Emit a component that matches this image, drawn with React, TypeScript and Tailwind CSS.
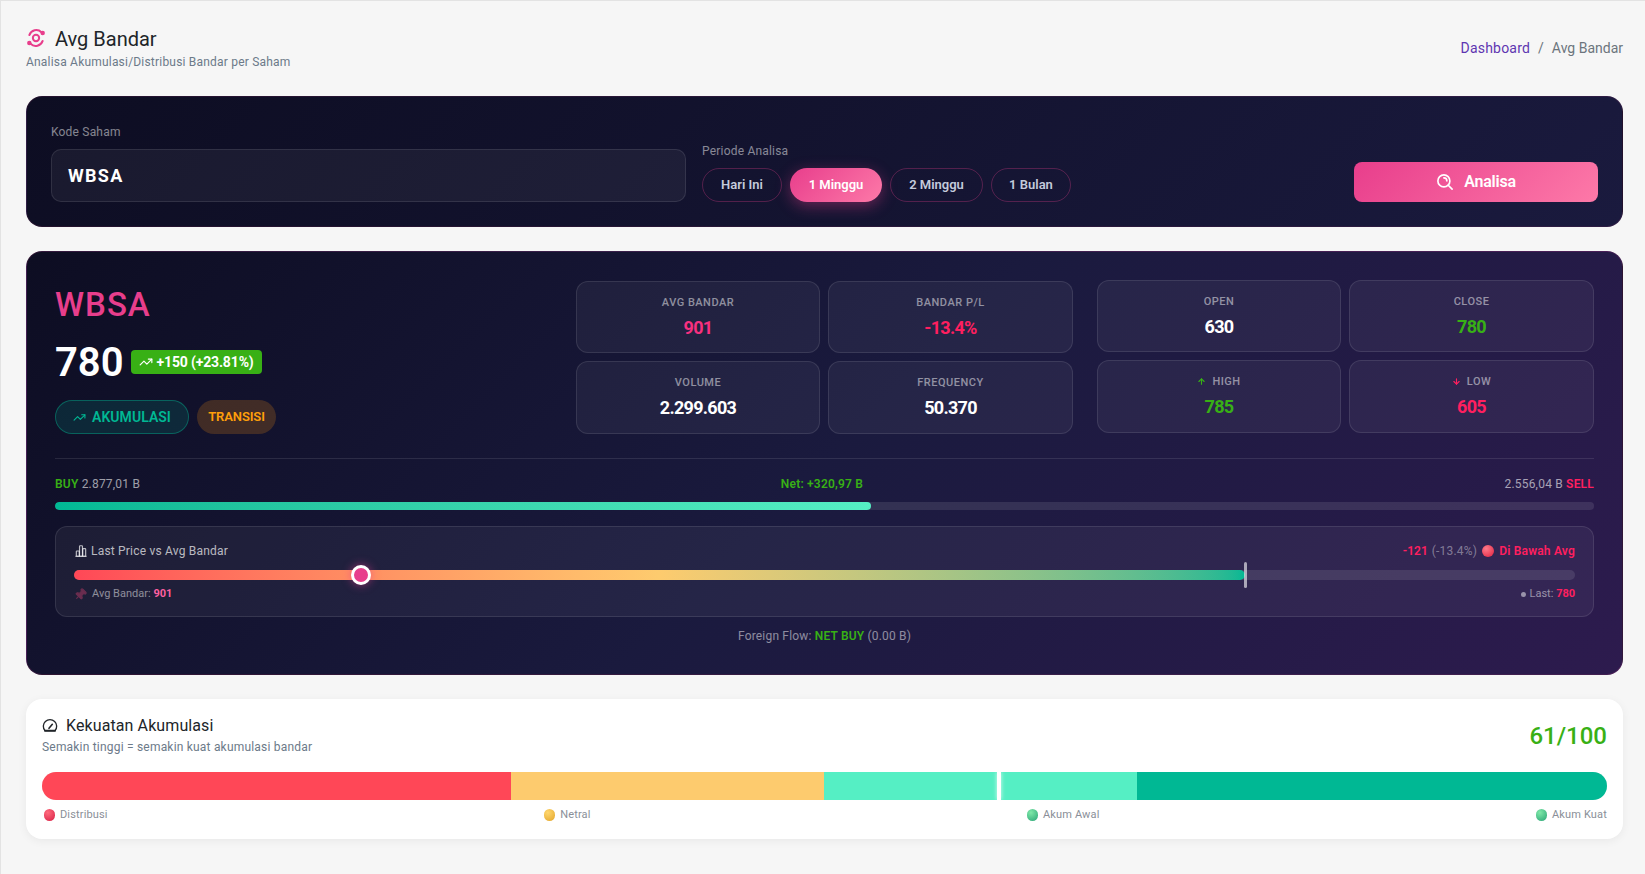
import { TrendingUp, ArrowUp, ArrowDown, Pin } from "lucide-react";

// ==============================================================

const BandarIcon = () => (
  <svg width="20" height="20" viewBox="0 0 24 24" fill="none" stroke="#e83e8c" strokeWidth="2.4" strokeLinecap="round" strokeLinejoin="round">
    <circle cx="12" cy="12" r="3.8" />
    <path d="M4 8.5A8.8 8.8 0 0 1 18.5 5" />
    <path d="M20 15.5A8.8 8.8 0 0 1 5.5 19" />
    <circle cx="20" cy="6" r="1.5" fill="#e83e8c" />
    <circle cx="4" cy="18" r="1.5" fill="#e83e8c" />
  </svg>
);

const SearchIcon = () => (
  <svg width="18" height="18" viewBox="0 0 24 24" fill="none" stroke="currentColor" strokeWidth="2.2" strokeLinecap="round" strokeLinejoin="round">
    <circle cx="10.5" cy="10.5" r="8" />
    <path d="M21.5 21.5l-5.2-5.2" />
    <path d="M10.5 6.5a4 4 0 0 1 4 4" />
  </svg>
);

const GaugeIcon = () => (
  <svg width="16" height="16" viewBox="0 0 24 24" fill="none" stroke="#212529" strokeWidth="2" strokeLinecap="round" strokeLinejoin="round">
    <path d="M4.5 19a10 10 0 1 1 15 0z" />
    <path d="M4.5 19h15" strokeWidth="3" />
    <path d="M10.5 15.5L15.5 9.5" strokeWidth="2.4" />
  </svg>
);

const BarsIcon = () => (
  <svg width="14" height="14" viewBox="0 0 24 24" fill="none" stroke="currentColor" strokeWidth="2" strokeLinecap="round" strokeLinejoin="round">
    <path d="M3 21h18" />
    <rect x="4" y="12" width="5" height="9" rx="1" />
    <rect x="9.5" y="3" width="5" height="18" rx="1" />
    <rect x="15" y="8" width="5" height="13" rx="1" />
  </svg>
);

const Dot = ({ className }: { className: string }) => (
  <span className={`inline-block rounded-full ${className}`} />
);

const StatBox = ({ label, value, color, icon }: { label: string; value: string; color: string; icon?: React.ReactNode }) => (
  <div className="flex h-[72.4px] flex-col items-center rounded-xl border border-white/10 bg-white/5 pt-[13px]">
    <div className="flex h-[15px] items-center gap-1.5 text-[11px] font-medium leading-none tracking-[0.5px] text-white/50">
      {icon}
      {label}
    </div>
    <div className={`mt-[4px] text-[18px] font-bold leading-[27px] tracking-[-0.7px] ${color}`}>{value}</div>
  </div>
);

const periods = ["Hari Ini", "1 Minggu", "2 Minggu", "1 Bulan"];

const App = () => {
  return (
    <div className="min-h-[874px] border-l border-t border-[#e3e3e3] bg-[#f6f6f6] pl-[25px] pr-[22px] pt-[23px] font-['Roboto',sans-serif] text-[#212529]">
      {/* header */}
      <div className="flex items-center justify-between">
        <div>
          <div className="flex h-[30px] items-center">
            <span className="mr-[9px] -mt-[3px]">
              <BandarIcon />
            </span>
            <h1 className="text-[20px] font-normal leading-[30px]">Avg Bandar</h1>
          </div>
          <p className="-mt-[1px] text-[12px] leading-[18px] tracking-[0.2px] text-[#6c7a89]">Analisa Akumulasi/Distribusi Bandar per Saham</p>
        </div>
        <div className="mt-[2px] flex items-center text-[14px] leading-[21px]">
          <span className="tracking-[0.2px] text-[#5e35b1]">Dashboard</span>
          <span className="mx-2 text-[#6c757d]">/</span>
          <span className="text-[#6c757d]">Avg Bandar</span>
        </div>
      </div>

      {/* form */}
      <div className="mt-[25px] flex h-[131px] items-end rounded-2xl border border-[#e83e8c]/10 bg-[linear-gradient(135deg,#0d0d22_0%,#1a1a3e_100%)] px-[24px] pb-[24px]">
        <div className="w-[635px]">
          <label className="block text-[12px] leading-[18px] tracking-[0.2px] text-white/50">Kode Saham</label>
          <div className="mt-[8px] flex h-[53px] items-center rounded-[10px] border border-white/10 bg-white/5 px-[16px] text-[18px] font-bold tracking-[1.3px] text-white">
            WBSA
          </div>
        </div>
        <div className="ml-[16px] flex-1">
          <label className="block text-[12px] leading-[18px] tracking-[0.2px] text-white/50">Periode Analisa</label>
          <div className="mt-[8px] flex gap-[8px]">
            {periods.map((p) =>
              p === "1 Minggu" ? (
                <span key={p} className="flex h-[34px] w-[92px] items-center justify-center rounded-[20px] bg-[linear-gradient(135deg,#e83e8c,#fd79a8)] text-[13px] font-semibold text-white shadow-[0_4px_15px_rgba(232,62,140,0.4)]">
                  {p}
                </span>
              ) : (
                <span key={p} className={`flex h-[34px] items-center justify-center rounded-[20px] border border-[#e83e8c]/30 text-[13px] font-semibold text-[#c4cbdc] ${p === "2 Minggu" ? "w-[93px]" : "w-[80px]"}`}>
                  {p}
                </span>
              )
            )}
          </div>
        </div>
        <button className="flex h-[40px] w-[244px] items-center justify-center gap-[10px] rounded-lg bg-[linear-gradient(135deg,#e83e8c,#fd79a8)] text-[16px] font-semibold tracking-[-0.2px] text-white">
          <SearchIcon />
          Analisa
        </button>
      </div>

      {/* result */}
      <div className="mt-[24px] h-[424px] rounded-2xl border border-[#e83e8c]/15 bg-[linear-gradient(135deg,#0d0d22_0%,#1a1a3e_50%,#2d1b4e_100%)] px-[28px] pt-[28px]">
        <div className="grid h-[179px] grid-cols-3 gap-6 border-b border-white/10">
          <div>
            <div className="mt-[6px] text-[33px] font-medium leading-[38px] tracking-[1px] text-[#e83e8c]">WBSA</div>
            <div className="mt-[15px] flex items-center">
              <span className="text-[40px] font-semibold leading-[48px] text-white">780</span>
              <span className="-mt-[2px] ml-[7px] flex h-[24px] w-[131px] items-center justify-center gap-1 rounded bg-[#38b015] text-[14px] font-bold tracking-[-0.15px] text-white">
                <TrendingUp size={14} strokeWidth={2} />
                +150 (+23.81%)
              </span>
            </div>
            <div className="mt-[13px] flex gap-2">
              <span className="flex h-[34px] w-[134px] items-center justify-center gap-[6px] rounded-[20px] border border-[#00b894]/40 bg-[#00b894]/15 text-[14px] font-semibold tracking-[0.05px] text-[#00b894]">
                <TrendingUp size={13} strokeWidth={2} />
                AKUMULASI
              </span>
              <span className="flex h-[34px] w-[79px] items-center justify-center rounded-[20px] bg-[#fd9610]/20 text-[13px] font-semibold tracking-[-0.1px] text-[#ff9f0a]">
                TRANSISI
              </span>
            </div>
          </div>
          <div className="mt-px grid grid-cols-[244px_1fr] content-start gap-2">
            <StatBox label="AVG BANDAR" value="901" color="text-[#f7307f]" />
            <StatBox label="BANDAR P/L" value="-13.4%" color="text-[#ff1f5f]" />
            <StatBox label="VOLUME" value="2.299.603" color="text-white" />
            <StatBox label="FREQUENCY" value="50.370" color="text-white" />
          </div>
          <div className="grid grid-cols-[244px_1fr] content-start gap-2">
            <StatBox label="OPEN" value="630" color="text-white" />
            <StatBox label="CLOSE" value="780" color="text-[#38b015]" />
            <StatBox label="HIGH" value="785" color="text-[#38b015]" icon={<ArrowUp size={9} strokeWidth={3} className="text-[#38b015]" />} />
            <StatBox label="LOW" value="605" color="text-[#ff1f5f]" icon={<ArrowDown size={9} strokeWidth={3} className="text-[#ff1f5f]" />} />
          </div>
        </div>

        <div className="mt-[15px] flex h-[19px] items-center justify-between text-[12px] tracking-[0.2px] text-white/60">
          <div className="w-[400px]">
            <span className="font-semibold text-[#38b015]">BUY</span> 2.877,01 B
          </div>
          <div className="mr-[5px] font-semibold text-[#38b015]">Net: +320,97 B</div>
          <div className="w-[400px] text-right">
            2.556,04 B <span className="font-semibold text-[#ff1f5f]">SELL</span>
          </div>
        </div>
        <div className="mt-[9px] h-2 overflow-hidden rounded-full bg-white/10">
          <div className="h-full w-[53%] rounded-full bg-gradient-to-r from-[#00b894] to-[#55efc4]" />
        </div>

        <div className="mt-[16px] h-[91px] rounded-xl border border-white/10 bg-white/5 px-[18px] pt-[15px]">
          <div className="flex h-[18px] items-center justify-between text-[12px]">
            <div className="flex items-center gap-[3px] tracking-[0.2px] text-white/70">
              <BarsIcon />
              Last Price vs Avg Bandar
            </div>
            <div className="flex items-center text-white/40">
              <span className="font-semibold text-[#ff1f5f]">-121</span>
              <span className="ml-1 tracking-[0.2px]">(-13.4%)</span>
              <Dot className="ml-[5px] h-[12px] w-[12px] bg-[radial-gradient(circle_at_35%_30%,#ff7a8a,#e0213f)]" />
              <span className="ml-[5px] font-semibold tracking-[0.2px] text-[#ff1f5f]">Di Bawah Avg</span>
            </div>
          </div>
          <div className="relative mt-[10px] h-[10px] rounded-full bg-white/10">
            <div className="h-full w-[78%] rounded-full bg-gradient-to-r from-[#ff4757] via-[#fdcb6e] to-[#00b894]" />
            <div className="absolute left-[77.95%] top-[-8px] h-[26px] w-[3px] rounded-full bg-white/60" />
            <div className="absolute left-[18.45%] top-[-5px] h-[20px] w-[20px] rounded-full border-[3px] border-white bg-[#e83e8c] shadow-[0_0_10px_rgba(232,62,140,0.6)]" />
          </div>
          <div className="mt-[8px] flex h-[12px] items-center justify-between text-[11px] text-white/50">
            <div className="flex items-center">
              <Pin size={13} strokeWidth={2} className="rotate-45 fill-[#6b2d4f] text-[#6b2d4f]" />
              <span className="ml-[5px]">Avg Bandar:</span>
              <span className="ml-[3px] font-bold tracking-[-0.1px] text-[#fd5fa0]">901</span>
            </div>
            <div className="flex items-center">
              <Dot className="mr-[4px] h-[5px] w-[5px] bg-white/50" />
              Last:
              <span className="ml-[3px] font-bold tracking-[-0.1px] text-[#ff1f5f]">780</span>
            </div>
          </div>
        </div>

        <div className="mt-[10px] text-center text-[12px] leading-[18px] tracking-[0.18px] text-white/50">
          Foreign Flow: <span className="font-semibold text-[#38b015]">NET BUY</span> (0.00 B)
        </div>
      </div>

      {/* kekuatan */}
      <div className="mt-[24px] h-[140px] rounded-2xl bg-white px-[16px] pt-[15px] shadow-[0_2px_10px_rgba(0,0,0,0.06)]">
        <div className="flex items-center justify-between">
          <div>
            <div className="flex h-[24px] items-center text-[16px] tracking-[0.1px]">
              <span className="mr-[8px]">
                <GaugeIcon />
              </span>
              Kekuatan Akumulasi
            </div>
            <p className="text-[12px] leading-[18px] tracking-[0.2px] text-[#6c7a89]">Semakin tinggi = semakin kuat akumulasi bandar</p>
          </div>
          <div className="mt-[2px] text-[24px] font-medium leading-[36px] text-[#38b015]">61/100</div>
        </div>
        <div className="relative mt-[16px] flex h-[28px] overflow-hidden rounded-[14px] shadow-[inset_0_2px_4px_rgba(0,0,0,0.1)]">
          <div className="w-[29.95%] bg-[#ff4757]" />
          <div className="w-[20%] bg-[#fdcb6e]" />
          <div className="w-[20%] bg-[#55efc4]" />
          <div className="flex-1 bg-[#00b894]" />
          <div className="absolute bottom-0 left-[61%] top-0 w-[4px] bg-white shadow-[0_0_4px_rgba(255,255,255,0.8)]" />
        </div>
        <div className="mt-[7px] flex justify-between text-[11px] leading-[16px] tracking-[0.15px] text-[#8a8f98]">
          <div className="flex items-center gap-[5px] pl-[2px]">
            <Dot className="h-[12px] w-[11px] bg-[radial-gradient(circle_at_35%_30%,#ff6b7d,#d81f45)]" />
            Distribusi
          </div>
          <div className="flex items-center gap-[5px]">
            <Dot className="h-[12px] w-[11px] bg-[radial-gradient(circle_at_35%_30%,#ffd76e,#e3a52a)]" />
            Netral
          </div>
          <div className="flex items-center gap-[5px]">
            <Dot className="h-[12px] w-[11px] bg-[radial-gradient(circle_at_35%_30%,#7fe8a8,#2aa576)]" />
            Akum Awal
          </div>
          <div className="flex items-center gap-[5px]">
            <Dot className="h-[12px] w-[11px] bg-[radial-gradient(circle_at_35%_30%,#7fe8a8,#2aa576)]" />
            Akum Kuat
          </div>
        </div>
      </div>
    </div>
  );
};

export default App;
